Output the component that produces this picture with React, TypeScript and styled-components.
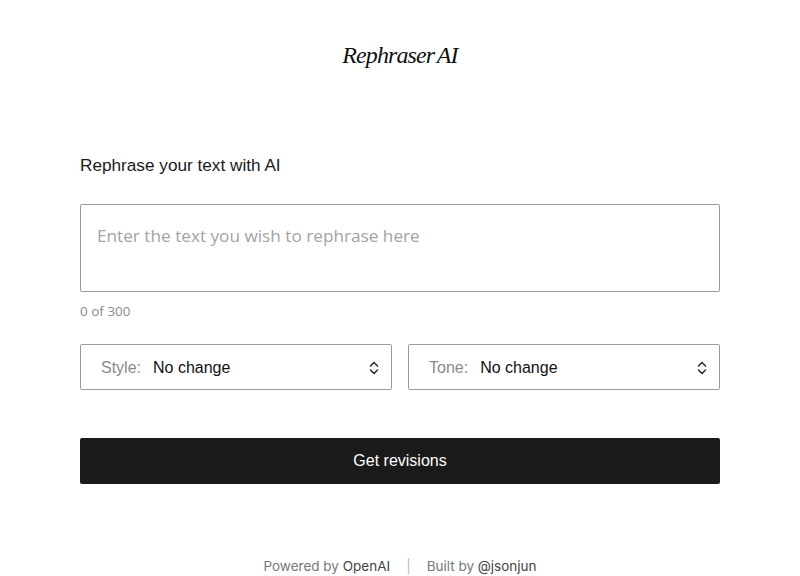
import React from "react";
import styled, { createGlobalStyle } from "styled-components";

const Global = createGlobalStyle`
  html, body { margin: 0; padding: 0; background: #fff; }
  body { font-family: "Liberation Sans", Arial, sans-serif; color: #1a1a1a; }
  * { box-sizing: border-box; }
`;

const Page = styled.div`
  width: 800px;
  height: 576px;
  display: flex;
  flex-direction: column;
  align-items: center;
  overflow: hidden;
`;

const Title = styled.h1`
  margin: 39px 0 0;
  height: 32px;
  font-family: "Liberation Serif", "Times New Roman", serif;
  font-style: italic;
  font-weight: 400;
  font-size: 24px;
  letter-spacing: -0.9px;
  word-spacing: -2px;
  line-height: 32px;
  color: #111;
`;

const Main = styled.main`
  width: 640px;
  margin-top: 82px;
  display: flex;
  flex-direction: column;
`;

const Heading = styled.h2`
  margin: 0;
  font-size: 17.2px;
  font-weight: 400;
  line-height: 24px;
  color: #1a1a1a;
`;

const TextArea = styled.textarea`
  margin-top: 27px;
  width: 640px;
  height: 88px;
  border: 1px solid #9a9a9a;
  border-radius: 2px;
  padding: 19px 16px;
  font-family: "Open Sans", "Noto Sans", sans-serif;
  font-size: 17.2px;
  line-height: 24px;
  resize: none;
  outline: none;
  color: #1a1a1a;
  &::placeholder { color: #a3a3a3; }
`;

const Counter = styled.div`
  margin-top: 10px;
  font-family: "Open Sans", "Noto Sans", sans-serif;
  font-size: 13.5px;
  line-height: 18px;
  color: #8a8a8a;
`;

const SelectRow = styled.div`
  margin-top: 24px;
  display: grid;
  grid-template-columns: 1fr 1fr;
  gap: 16px;
`;

const SelectBox = styled.div`
  height: 46px;
  border: 1px solid #9a9a9a;
  border-radius: 2px;
  display: flex;
  align-items: center;
  padding: 1px 12px 0 20px;
  font-size: 16px;
`;

const SelLabel = styled.span`
  color: #8a8a8a;
  margin-right: 12px;
`;

const SelValue = styled.span`
  color: #111;
  flex: 1;
`;

const Button = styled.button`
  margin-top: 48px;
  height: 46px;
  width: 100%;
  border: none;
  border-radius: 2px;
  background: #1a1a1a;
  color: #fff;
  font-family: "Liberation Sans", Arial, sans-serif;
  font-size: 16px;
  padding-top: 1px;
`;

const Footer = styled.footer`
  margin-top: 74px;
  display: flex;
  align-items: center;
  gap: 16px;
  font-family: Inter, sans-serif;
  font-size: 13.5px;
  color: #777;
`;

const Strong = styled.span`
  color: #444;
`;

const Sep = styled.span`
  color: #bbb;
`;

const Chevrons = () => (
  <svg width="10" height="16" viewBox="0 0 10 16" fill="none" stroke="#222" strokeWidth="1.4" strokeLinecap="round" strokeLinejoin="round">
    <path d="M1.5 6 L5 2.5 L8.5 6" />
    <path d="M1.5 10 L5 13.5 L8.5 10" />
  </svg>
);

export default function App() {
  return (
    <Page>
      <Global />
      <Title>Rephraser AI</Title>
      <Main>
        <Heading>Rephrase your text with AI</Heading>
        <TextArea placeholder="Enter the text you wish to rephrase here" />
        <Counter>0 of 300</Counter>
        <SelectRow>
          <SelectBox>
            <SelLabel>Style:</SelLabel>
            <SelValue>No change</SelValue>
            <Chevrons />
          </SelectBox>
          <SelectBox>
            <SelLabel>Tone:</SelLabel>
            <SelValue>No change</SelValue>
            <Chevrons />
          </SelectBox>
        </SelectRow>
        <Button>Get revisions</Button>
      </Main>
      <Footer>
        <span>Powered by <Strong>OpenAI</Strong></span>
        <Sep>|</Sep>
        <span>Built by <Strong>@jsonjun</Strong></span>
      </Footer>
    </Page>
  );
}
